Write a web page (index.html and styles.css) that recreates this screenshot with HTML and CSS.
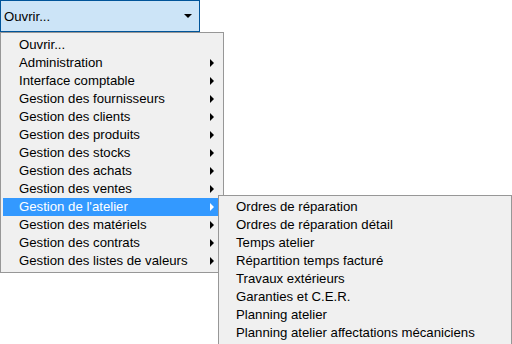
FILE: index.html
```html
<!DOCTYPE html>
<html lang="fr">
<head>
    <meta charset="UTF-8">
    <title>Ouvrir</title>
    <link rel="stylesheet" href="styles.css">
</head>
<body>
    <div class="combo">
        <span class="combo-text">Ouvrir...</span>
        <span class="combo-arrow"></span>
    </div>

    <ul class="menu main-menu">
        <li class="item">Ouvrir...</li>
        <li class="item sub">Administration</li>
        <li class="item sub">Interface comptable</li>
        <li class="item sub">Gestion des fournisseurs</li>
        <li class="item sub">Gestion des clients</li>
        <li class="item sub">Gestion des produits</li>
        <li class="item sub">Gestion des stocks</li>
        <li class="item sub">Gestion des achats</li>
        <li class="item sub">Gestion des ventes</li>
        <li class="item sub active">Gestion de l'atelier
            <ul class="menu sub-menu">
                <li class="item">Ordres de réparation</li>
                <li class="item">Ordres de réparation détail</li>
                <li class="item">Temps atelier</li>
                <li class="item">Répartition temps facturé</li>
                <li class="item">Travaux extérieurs</li>
                <li class="item">Garanties et C.E.R.</li>
                <li class="item">Planning atelier</li>
                <li class="item">Planning atelier affectations mécaniciens</li>
            </ul>
        </li>
        <li class="item sub">Gestion des matériels</li>
        <li class="item sub">Gestion des contrats</li>
        <li class="item sub">Gestion des listes de valeurs</li>
    </ul>
</body>
</html>
```
FILE: styles.css
```css
* {
    margin: 0;
    padding: 0;
    box-sizing: border-box;
}

body {
    width: 512px;
    height: 344px;
    background: #ffffff;
    font-family: 'Liberation Sans', Arial, sans-serif;
    font-size: 13.2px;
    color: #000000;
    overflow: hidden;
}

.combo {
    width: 200px;
    height: 32px;
    background: #cce4f7;
    border: 1px solid #005499;
    display: flex;
    align-items: center;
    justify-content: space-between;
    padding: 0 7px 0 3px;
}

.combo-arrow {
    width: 0;
    height: 0;
    border-left: 4px solid transparent;
    border-right: 4px solid transparent;
    border-top: 4px solid #000000;
}

.menu {
    list-style: none;
    background: #f0f0f0;
    border: 1px solid #979797;
}

.main-menu {
    width: 224px;
    padding: 3px 2px 2px 2px;
}

.item {
    height: 18px;
    line-height: 18px;
    padding-left: 16px;
    position: relative;
    white-space: nowrap;
}

.sub::after {
    content: '';
    position: absolute;
    right: 7px;
    top: 5px;
    border-top: 4px solid transparent;
    border-bottom: 4px solid transparent;
    border-left: 4px solid #000000;
}

.active {
    background: #3399ff;
    color: #ffffff;
}

.active::after {
    border-left-color: #ffffff;
}

.sub-menu {
    position: absolute;
    left: 215px;
    top: -3px;
    width: 294px;
    padding: 2px;
    color: #000000;
}

.sub-menu .item {
    padding-left: 15px;
}
```
